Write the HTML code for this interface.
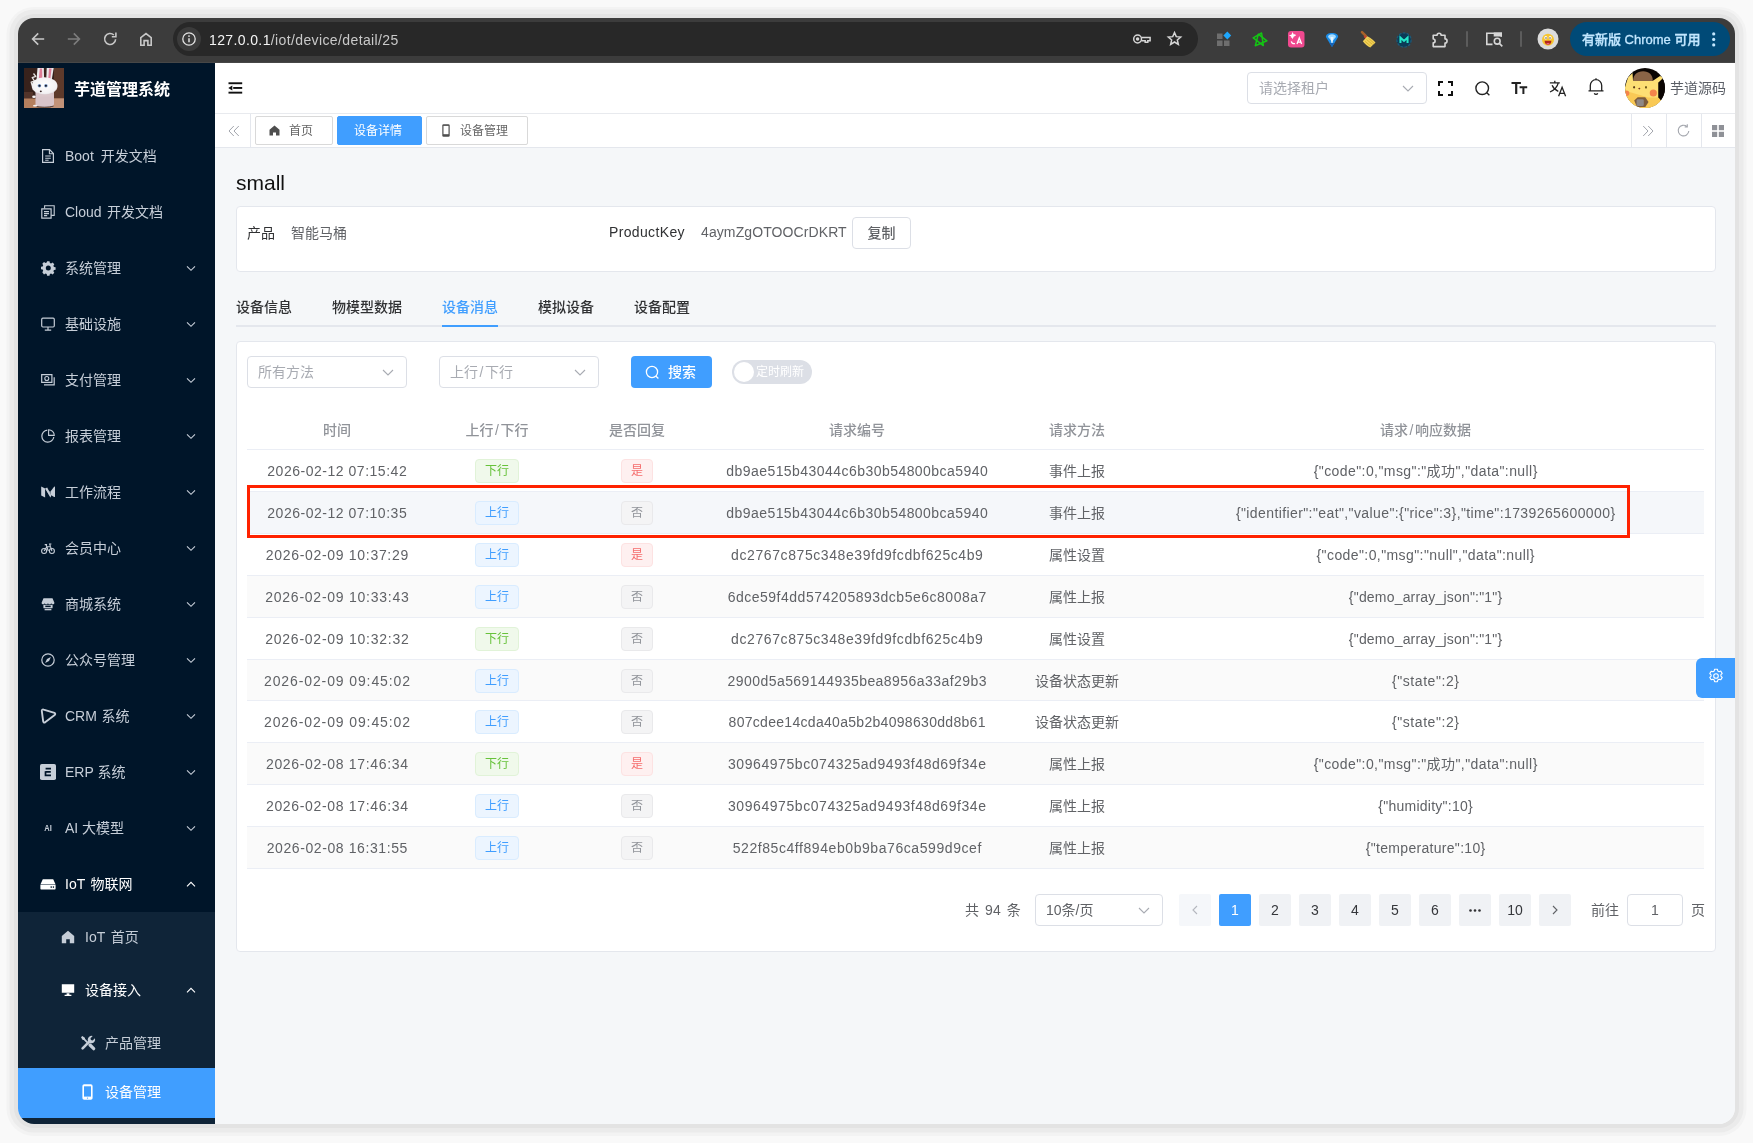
<!DOCTYPE html>
<html lang="zh-CN">
<head>
<meta charset="utf-8">
<title>设备详情</title>
<style>
*{box-sizing:border-box;margin:0;padding:0}
html,body{width:1753px;height:1143px;overflow:hidden}
body{background:#f9f9f9;font-family:"Liberation Sans","Noto Sans CJK SC",sans-serif;font-size:14px;color:#606266;position:relative}
.shadow{position:absolute;left:18px;top:18px;width:1717px;height:1106px;border-radius:16px;box-shadow:0 0 0 4px #e3e3e3,0 0 0 8.500px #ebebeb,0 .5px 0 11.500px #f3f3f3}
.win{position:absolute;left:18px;top:18px;width:1717px;height:1106px;border-radius:16px;overflow:hidden;background:#f5f7f9}
.pg{position:absolute;left:-18px;top:-18px;width:1753px;height:1143px;will-change:transform}
.abs{position:absolute}
svg{display:block;overflow:visible}
/* chrome toolbar */
.chrome{position:absolute;left:18px;top:18px;width:1717px;height:45px;background:#3c3c3c;border-bottom:1px solid #474747}
.omni{position:absolute;left:173px;top:22px;width:1025px;height:34px;border-radius:17px;background:#282828}
.url{position:absolute;left:209px;top:30.500px;font-size:14px;line-height:18px;color:#c9c9c9;letter-spacing:.38px}
.upd{position:absolute;left:1570px;top:22px;width:160px;height:34px;border-radius:17px;background:#004a77}
.upd span{position:absolute;left:12px;top:9px;font-size:13px;line-height:18px;color:#c2e7ff;font-weight:500;white-space:nowrap;-webkit-text-stroke:.3px #c2e7ff}
/* sidebar */
.side{position:absolute;left:18px;top:63px;width:197px;height:1061px;background:#001529}
.sub{position:absolute;left:18px;top:912px;width:197px;height:212px;background:#0f2438}
.act{position:absolute;left:18px;top:1068px;width:197px;height:50px;background:#409eff}
.mi{position:absolute;left:65px;height:20px;line-height:20px;font-size:14px;color:#cfd6de;white-space:nowrap}
.chev{position:absolute;left:185px;width:10px;height:6px}
/* header */
.hdr{position:absolute;left:215px;top:63px;width:1520px;height:51px;background:#fff;border-bottom:1px solid #e8eaee}
.tags{position:absolute;left:215px;top:114px;width:1520px;height:34px;background:#fff;border-bottom:1px solid #e4e7ed}
.tag{position:absolute;top:116px;height:29px;border:1px solid #d9d9d9;border-radius:2px;font-size:12px;line-height:28.5px;color:#666;background:#fff;white-space:nowrap}
.tag.on{background:#409eff;border-color:#409eff;color:#fff}
.card{position:absolute;background:#fff;border:1px solid #e4e7ed;border-radius:4px}
.sel{position:absolute;height:32px;border:1px solid #dcdfe6;border-radius:4px;background:#fff;font-size:14px;line-height:30px;color:#a8abb2;padding-left:10px;white-space:nowrap}

.t14{position:absolute;font-size:14px;line-height:20px;white-space:nowrap}
.tab{position:absolute;top:297px;font-size:14px;line-height:20px;font-weight:500;color:#303133;white-space:nowrap}
.th{position:absolute;top:420px;font-size:14px;line-height:20px;font-weight:500;color:#909399;text-align:center;white-space:nowrap}
.row{position:absolute;left:247px;width:1457px;height:42px;border-bottom:1px solid #ebeef5}
.row.st{background:#fafafa}
.row.hv{background:#f5f7fa}
.c{position:absolute;top:0;height:42px;line-height:42px;font-size:14px;color:#606266;text-align:center;white-space:nowrap}
.c1{left:0;width:180px;letter-spacing:.55px}
.c2{left:180px;width:140px}
.c3{left:320px;width:140px}
.c4{left:460px;width:300px;letter-spacing:.44px}
.c5{left:760px;width:140px}
.c6{left:900px;width:557px;letter-spacing:.36px}
.tg{display:inline-block;vertical-align:middle;height:24px;line-height:22px;padding:0 9px;font-size:12px;border:1px solid;border-radius:4px;letter-spacing:0;position:relative;top:-1px}
.tg.b{color:#409eff;background:#ecf5ff;border-color:#d9ecff}
.tg.g{color:#67c23a;background:#f0f9eb;border-color:#e1f3d8}
.tg.r{color:#f56c6c;background:#fef0f0;border-color:#fde2e2}
.tg.i{color:#909399;background:#f4f4f5;border-color:#e9e9eb}
.pb{position:absolute;top:894px;width:32px;height:32px;border-radius:2px;background:#f0f2f5;color:#35373b;font-size:14px;line-height:32px;text-align:center}
.pb.on{background:#409eff;color:#fff}
</style>
</head>
<body>
<div class="shadow"></div>
<div class="win"><div class="pg">

<!-- CHROME -->
<div class="chrome"></div>
<div class="omni"></div>
<div class="url"><span style="color:#f4f4f4">127.0.0.1</span>/iot/device/detail/25</div>
<div class="upd"><span>有新版 Chrome 可用</span></div>
<!-- nav icons -->
<svg class="abs" style="left:30px;top:31px" width="16" height="16" viewBox="0 0 16 16" fill="none" stroke="#c7c7c7" stroke-width="1.6"><path d="M14.2 8H2.8M8.2 2.4L2.6 8l5.6 5.6"/></svg>
<svg class="abs" style="left:66px;top:31px" width="16" height="16" viewBox="0 0 16 16" fill="none" stroke="#7d7d7d" stroke-width="1.6"><path d="M1.8 8h11.4M7.8 2.4L13.4 8l-5.6 5.6"/></svg>
<svg class="abs" style="left:102px;top:31px" width="16" height="16" viewBox="0 0 16 16" fill="none" stroke="#c7c7c7" stroke-width="1.6"><path d="M13.6 8.2A5.5 5.5 0 1 1 11.9 4"/><path d="M13.9 1.6v4.1H9.8" stroke-linejoin="miter"/></svg>
<svg class="abs" style="left:138px;top:31px" width="16" height="16" viewBox="0 0 16 16" fill="none" stroke="#c7c7c7" stroke-width="1.6"><path d="M2.8 14.2V6.6L8 2.5l5.2 4.1v7.6H9.9V9.6H6.1v4.6z"/></svg>
<div class="abs" style="left:177px;top:27px;width:24px;height:24px;border-radius:12px;background:#3b3b3b"></div>
<svg class="abs" style="left:181px;top:31px" width="16" height="16" viewBox="0 0 16 16" fill="none" stroke="#e3e3e3" stroke-width="1.3"><circle cx="8" cy="8" r="6.2"/><path d="M8 7.3v3.9" stroke-width="1.5"/><circle cx="8" cy="5.1" r=".9" fill="#e3e3e3" stroke="none"/></svg>
<!-- key + star -->
<svg class="abs" style="left:1132px;top:30px" width="20" height="18" viewBox="0 0 20 18" fill="none" stroke="#d6d6d6" stroke-width="1.5"><circle cx="5.6" cy="9" r="3.9"/><circle cx="5.6" cy="9" r="1" fill="#d6d6d6"/><path d="M9.5 7.4h8.6v3.3h-2.3v1.6h-2.6v-1.6H9.5"/></svg>
<svg class="abs" style="left:1166.500px;top:31px" width="15" height="15" viewBox="0 0 18 18" fill="none" stroke="#d6d6d6" stroke-width="1.800" stroke-linejoin="miter"><path d="M9 1.9l2.1 4.9 5.3.5-4 3.5 1.2 5.2L9 13.2 4.4 16l1.2-5.2-4-3.5 5.3-.5z"/></svg>
<!-- extensions -->
<svg class="abs" style="left:1216px;top:31px" width="16" height="16" viewBox="0 0 16 16"><rect x="1" y="2.5" width="5.5" height="5.5" fill="#6e6e6e"/><rect x="1" y="9.5" width="5.5" height="5.5" fill="#6e6e6e"/><rect x="8" y="9.5" width="5.5" height="5.5" fill="#6e6e6e"/><path d="M11.3 0.6l3.9 3.9-3.9 3.9-3.9-3.9z" fill="#1ea7fd"/></svg>
<svg class="abs" style="left:1252px;top:32px" width="16" height="16" viewBox="0 0 16 16" fill="none" stroke="#14c414" stroke-width="1.500" stroke-linejoin="round"><path d="M9.600 1l1.700 12.600L1.200 5.800z"/><path d="M3.300 13.700L6.300 2.200l8.600 6.600z"/></svg>
<svg class="abs" style="left:1288px;top:31px" width="17" height="17" viewBox="0 0 17 17"><rect x="0" y="0" width="16.5" height="16.5" rx="3" fill="#f0498f"/><path d="M9 13l2.3-6.2L13.6 13M9.8 11.2h3M3.4 6.6a3 3 0 0 1 4-2.4M7 12.6a3.2 3.2 0 0 1-3.7-2.3M4.6 2.6l.6 1.4 1.4.6-1.4.6-.6 1.4-.6-1.4-1.4-.6 1.4-.6z" fill="none" stroke="#fff" stroke-width="1.3"/></svg>
<svg class="abs" style="left:1325px;top:31.500px" width="14" height="16" viewBox="0 0 16 18"><path d="M1 5.500C1 2.700 4 1 8 1s7 1.700 7 4.500L8 17z" fill="#1c8de8"/><path d="M3.500 5.500C3.500 3.500 5.500 2.300 8 2.300s4.500 1.200 4.500 3.200L8 11z" fill="#a8ddff"/><path d="M6.300 5.500L8 16l1.700-10.500z" fill="#e8f6ff"/><path d="M5 12.500L8 17l3-4.500z" fill="#1463b8"/></svg>
<svg class="abs" style="left:1358px;top:29px" width="20" height="20" viewBox="0 0 20 20"><path d="M4 3.200l4 4" stroke="#a8622a" stroke-width="2.600" stroke-linecap="round"/><path d="M7.200 6.200l2.600 2.500-1.700 1.700-2.500-2.600z" fill="#c9452f"/><path d="M9.300 7.200c3 1.200 6.200 3.700 8.200 6.400l-5.200 5c-2.700-1.300-5.500-3.400-7.500-6.300z" fill="#efcf57"/><path d="M8.500 10.500l6 5M7 12.300l5.500 4.700M10.500 9.300l5.800 5.200" stroke="#d3a928" stroke-width=".8" fill="none"/></svg>
<svg class="abs" style="left:1396px;top:31.500px" width="16" height="16" viewBox="0 0 18 18"><circle cx="9" cy="9" r="8" fill="#0b3b57" stroke="#1b5a7a" stroke-width="1.400" stroke-dasharray="3 1.500"/><path d="M5 12.300V6.200l4 3.800 4-3.800v6.100" fill="none" stroke="#25e6c8" stroke-width="2.300" stroke-linejoin="miter"/></svg>
<svg class="abs" style="left:1431px;top:29.500px" width="19" height="19" viewBox="0 0 19 19" fill="none" stroke="#d6d6d6" stroke-width="1.600" stroke-linejoin="round"><path d="M2.200 5.200h3.900a2 2 0 0 1 4 0H14v3.700a2.050 2.050 0 0 1 0 4.100v3.600H2.200v-3.800a1.900 1.900 0 0 0 0-3.800z"/></svg>
<div class="abs" style="left:1466px;top:31px;width:2px;height:16px;background:#5c5c5c;border-radius:1px"></div>
<svg class="abs" style="left:1485px;top:30px" width="19" height="18" viewBox="0 0 19 18" fill="none" stroke="#d6d6d6" stroke-width="1.600"><path d="M7.500 14.400H1.800V3.300h14.400v3.500"/><path d="M9.500 3.300h6.700v2.400H9.500z" fill="#d6d6d6"/><circle cx="12.200" cy="11.200" r="2.900"/><path d="M14.300 13.400l3 3"/></svg>
<div class="abs" style="left:1520px;top:31px;width:2px;height:16px;background:#5c5c5c;border-radius:1px"></div>
<!-- profile avatar -->
<svg class="abs" style="left:1537px;top:28px" width="22" height="22" viewBox="0 0 22 22"><circle cx="11" cy="11" r="10.500" fill="#dcdcdc"/><circle cx="11" cy="11.800" r="6" fill="#f7c531"/><ellipse cx="8.800" cy="9.800" rx="1.500" ry="1.800" fill="#fff"/><ellipse cx="13.200" cy="9.800" rx="1.500" ry="1.800" fill="#fff"/><circle cx="9" cy="10" r=".7" fill="#3b2a1a"/><circle cx="13" cy="10" r=".7" fill="#3b2a1a"/><path d="M7.600 12.800h6.800c0 2.600-1.500 3.900-3.400 3.900s-3.400-1.300-3.400-3.900z" fill="#b3261e"/><path d="M9.200 15.600c1-.9 2.600-.9 3.600 0-.9 1.300-2.700 1.300-3.600 0z" fill="#f06a8a"/></svg>
<svg class="abs" style="left:1711px;top:31px" width="5" height="17" viewBox="0 0 5 17" fill="#c2e7ff"><circle cx="2.700" cy="2.900" r="1.600"/><circle cx="2.700" cy="8.400" r="1.600"/><circle cx="2.700" cy="13.900" r="1.600"/></svg>


<!-- SIDEBAR -->
<div class="side"></div>
<div class="sub"></div>
<div class="act"></div>
<!-- logo -->
<svg class="abs" style="left:24px;top:68px" width="40" height="40" viewBox="0 0 40 40"><defs><radialGradient id="lg2" cx=".5" cy=".45" r=".62"><stop offset="0" stop-color="#ffffff"/><stop offset=".75" stop-color="#f3f1f3"/><stop offset="1" stop-color="#cfc7cc"/></radialGradient><clipPath id="lgc"><rect width="40" height="40"/></clipPath></defs><g clip-path="url(#lgc)"><rect width="40" height="40" fill="#38221c"/><path d="M30 0h10v31H30z" fill="#5e3a2b"/><path d="M0 24h9v7H0z" fill="#53342a"/><path d="M0 30.500h40V40H0z" fill="#b47f5e"/><path d="M27 30.500h13V40H27z" fill="#c29278"/><path d="M9.500 5.500l2.300 2.800-3.600 1.300 2.300 3.400-3.300 1.200 1 3.300" stroke="#e8e4e2" stroke-width="1.300" fill="none" stroke-linejoin="round"/><path d="M12.500 12L13.500 0h6.300l.3 11z" fill="#ecebed"/><path d="M14.800 10.500L15.800 .500h2.300l.2 10z" fill="#df7d96"/><path d="M22.300 11L22.700 0h7l-2 12z" fill="#ecebed"/><path d="M24.300 10.500L25 .500h2.600l-1.300 10.500z" fill="#df7d96"/><path d="M11.500 24h18.500v12c0 2-3 3-9.200 3s-9.300-1-9.300-3z" fill="#d8c4c9"/><path d="M12 38.500c4 1 13 1 17.500-.3" stroke="#4a3a38" stroke-width=".9" fill="none"/><ellipse cx="20.600" cy="18" rx="12.900" ry="8.800" fill="url(#lg2)"/><path d="M14 24.500c2 2.500 10.500 2.800 14 .3l1 3.700H13z" fill="#dbc8cc"/><circle cx="15.400" cy="17.700" r="1.800" fill="#7f9fd0"/><circle cx="21.900" cy="17.700" r="1.800" fill="#7f9fd0"/><circle cx="15.500" cy="17.800" r="1.050" fill="#1c1c24"/><circle cx="21.900" cy="17.800" r="1.050" fill="#1c1c24"/><ellipse cx="16.800" cy="23.400" rx="1" ry=".8" fill="#3c2a2a"/><ellipse cx="10" cy="28.700" rx="1.800" ry="1.200" fill="#f6f3f4"/><ellipse cx="11.200" cy="37.700" rx="2.200" ry=".9" fill="#f3f0f1"/></g></svg>
<div class="abs" style="left:74px;top:79px;font-size:16px;line-height:22px;font-weight:700;color:#fff;white-space:nowrap">芋道管理系统</div>
<!-- menu -->
<svg class="abs" style="left:41px;top:149px" width="14" height="14" viewBox="0 0 14 14" fill="none" stroke="#c6ced8"><path d="M1.600 .700h7l3.800 3.800v8.800H1.600z" stroke-width="1.200"/><path d="M8.400 .900v3.800h3.800M4.200 7h5.600M4.200 9.200h5.600M4.200 11.300h3.400" stroke-width="1.100"/></svg>
<div class="mi" style="word-spacing:3px;top:146px;color:#c6ced8">Boot 开发文档</div>
<svg class="abs" style="left:41px;top:205.0px" width="14" height="14" viewBox="0 0 14 14" ><path d="M.800 3.800h9.300v9.400H.800z" fill="none" stroke="#c6ced8" stroke-width="1.200"/><path d="M3.600 3.600V.800h9.600v9.600h-3M3 6.600h5M3 8.600h5M3 10.600h3.200" fill="none" stroke="#c6ced8" stroke-width="1.100"/></svg>
<div class="mi" style="word-spacing:1.5px;top:202px;color:#c6ced8">Cloud 开发文档</div>
<svg class="abs" style="left:41px;top:261.0px" width="14" height="14" viewBox="0 0 14 14" ><path d="M5.800 .500h2.400l.4 1.700 1.200.5 1.500-.9 1.700 1.700-.9 1.500.5 1.200 1.700.4v2.400l-1.700.4-.5 1.200.9 1.500-1.700 1.700-1.500-.9-1.200.5-.4 1.700H5.800l-.4-1.700-1.200-.5-1.500.9L1 11.600l.9-1.500-.5-1.200L-.300 8.500V6.100l1.700-.4.5-1.200L1 3 2.700 1.300l1.500.9 1.200-.5z" transform="translate(.3 -.3)" fill="#c6ced8"/><circle cx="7.300" cy="7" r="2.500" fill="#001529"/></svg>
<div class="mi" style="top:258px;color:#c6ced8">系统管理</div>
<svg class="abs" style="left:185.5px;top:264.5px" width="10" height="7" viewBox="0 0 10 7" fill="none" stroke="#c6ced8" stroke-width="1.100"><path d="M1 1.300l4 4 4-4"/></svg>
<svg class="abs" style="left:41px;top:317.0px" width="14" height="14" viewBox="0 0 14 14" ><rect x=".700" y="1.200" width="12.600" height="8.800" rx="1.200" fill="none" stroke="#c6ced8" stroke-width="1.200"/><path d="M7 10v3M3.800 13.100h6.400" stroke="#c6ced8" stroke-width="1.200" fill="none"/></svg>
<div class="mi" style="top:314px;color:#c6ced8">基础设施</div>
<svg class="abs" style="left:185.5px;top:320.5px" width="10" height="7" viewBox="0 0 10 7" fill="none" stroke="#c6ced8" stroke-width="1.100"><path d="M1 1.300l4 4 4-4"/></svg>
<svg class="abs" style="left:41px;top:373.0px" width="14" height="14" viewBox="0 0 14 14" ><path d="M.700 1.700h10.200v7.600H.700z" fill="none" stroke="#c6ced8" stroke-width="1.200"/><circle cx="5.800" cy="5.500" r="2" fill="none" stroke="#c6ced8" stroke-width="1.100"/><path d="M13.200 4.300v7.600H3" fill="none" stroke="#c6ced8" stroke-width="1.200"/></svg>
<div class="mi" style="top:370px;color:#c6ced8">支付管理</div>
<svg class="abs" style="left:185.5px;top:376.5px" width="10" height="7" viewBox="0 0 10 7" fill="none" stroke="#c6ced8" stroke-width="1.100"><path d="M1 1.300l4 4 4-4"/></svg>
<svg class="abs" style="left:41px;top:429.0px" width="14" height="14" viewBox="0 0 14 14" ><path d="M6.300 1.200A6 6 0 1 0 12.800 8" fill="none" stroke="#c6ced8" stroke-width="1.200"/><path d="M7.600 .700a5.700 5.700 0 0 1 5.700 5.700H7.600z" fill="none" stroke="#c6ced8" stroke-width="1.100"/></svg>
<div class="mi" style="top:426px;color:#c6ced8">报表管理</div>
<svg class="abs" style="left:185.5px;top:432.5px" width="10" height="7" viewBox="0 0 10 7" fill="none" stroke="#c6ced8" stroke-width="1.100"><path d="M1 1.300l4 4 4-4"/></svg>
<svg class="abs" style="left:41px;top:485px" width="14" height="14" viewBox="0 0 14 14"><path d="M.200 1.600l3.900 2v9l-3.900-2z" fill="#c6ced8"/><path d="M4.100 3.600L6.200 2.400l4 8.200-.7 2z" fill="#c6ced8"/><path d="M4.100 3.600l5.400 9V6.700z" fill="#c6ced8" opacity=".6"/><path d="M9.500 6.400l3.600-4.600c.3-.4.900-.2.900.3v9.400c0 .5-.5.800-.9.500l-3.600-2.200z" fill="#c6ced8"/></svg>
<div class="mi" style="top:482px;color:#c6ced8">工作流程</div>
<svg class="abs" style="left:185.5px;top:488.5px" width="10" height="7" viewBox="0 0 10 7" fill="none" stroke="#c6ced8" stroke-width="1.100"><path d="M1 1.300l4 4 4-4"/></svg>
<svg class="abs" style="left:41px;top:541px" width="14" height="14" viewBox="0 0 14 14" fill="none" stroke="#c6ced8" stroke-width="1.100"><circle cx="3.100" cy="10" r="2.500"/><circle cx="10.900" cy="10" r="2.500"/><path d="M3.100 10l2.700-4.300h3.700l1.400 4.300M5.800 5.700L5 3.600M3.700 3.600h2.400M9.500 5.700L8.600 3h1.800M5.800 5.700L7.300 10"/></svg>
<div class="mi" style="top:538px;color:#c6ced8">会员中心</div>
<svg class="abs" style="left:185.5px;top:544.5px" width="10" height="7" viewBox="0 0 10 7" fill="none" stroke="#c6ced8" stroke-width="1.100"><path d="M1 1.300l4 4 4-4"/></svg>
<svg class="abs" style="left:41px;top:597px" width="14" height="14" viewBox="0 0 14 14"><path d="M2.500 1.200h9l1.900 4.500c0 1-.7 1.600-1.600 1.600-.7 0-1.300-.4-1.500-1-.3.600-.9 1-1.600 1S7.300 6.900 7 6.300c-.3.600-.9 1-1.700 1s-1.300-.4-1.600-1c-.2.600-.8 1-1.500 1C1.300 7.300.600 6.700.600 5.700z" fill="#c6ced8"/><path d="M2.400 7.800h9.200v3.400H2.400z" fill="#c6ced8"/><path d="M4.300 8.600h5.400v1.500H4.300z" fill="#001529"/><path d="M3.600 11.800h6.800v1.500H3.600z" fill="#c6ced8"/></svg>
<div class="mi" style="top:594px;color:#c6ced8">商城系统</div>
<svg class="abs" style="left:185.5px;top:600.5px" width="10" height="7" viewBox="0 0 10 7" fill="none" stroke="#c6ced8" stroke-width="1.100"><path d="M1 1.300l4 4 4-4"/></svg>
<svg class="abs" style="left:41px;top:653.0px" width="14" height="14" viewBox="0 0 14 14" ><circle cx="7" cy="7" r="6.200" fill="none" stroke="#c6ced8" stroke-width="1.200"/><path d="M9.900 4.100L8 8 4.100 9.900 6 6z" fill="#c6ced8"/></svg>
<div class="mi" style="top:650px;color:#c6ced8">公众号管理</div>
<svg class="abs" style="left:185.5px;top:656.5px" width="10" height="7" viewBox="0 0 10 7" fill="none" stroke="#c6ced8" stroke-width="1.100"><path d="M1 1.300l4 4 4-4"/></svg>
<svg class="abs" style="left:40px;top:708px" width="17" height="16" viewBox="0 0 17 16" fill="none" stroke="#c6ced8" stroke-linejoin="round"><path d="M3.600 1.600c-1-.4-1.900.3-1.800 1.300l1.400 10.600c.1 1 1.200 1.400 1.900.8l9.600-7.300c.8-.6.700-1.700-.2-2.100z" stroke-width="1.900"/></svg>
<div class="mi" style="word-spacing:0.7px;top:706px;color:#c6ced8">CRM 系统</div>
<svg class="abs" style="left:185.5px;top:712.5px" width="10" height="7" viewBox="0 0 10 7" fill="none" stroke="#c6ced8" stroke-width="1.100"><path d="M1 1.300l4 4 4-4"/></svg>
<svg class="abs" style="left:40px;top:764px" width="16" height="16" viewBox="0 0 16 16"><rect x="0" y="0" width="16" height="16" rx="1.800" fill="#c6ced8"/><path d="M11 4.700H5.600M5.500 7.900h5.300M5.500 7.200v4.200H11" fill="none" stroke="#001529" stroke-width="1.700"/></svg>
<div class="mi" style="top:762px;color:#c6ced8">ERP 系统</div>
<svg class="abs" style="left:185.5px;top:768.5px" width="10" height="7" viewBox="0 0 10 7" fill="none" stroke="#c6ced8" stroke-width="1.100"><path d="M1 1.300l4 4 4-4"/></svg>
<svg class="abs" style="left:41px;top:821px" width="14" height="14" viewBox="0 0 14 14"><text x="7" y="10.200" font-size="8.500" font-weight="700" text-anchor="middle" fill="#c6ced8" font-family="Liberation Sans,sans-serif" textLength="7.500" lengthAdjust="spacingAndGlyphs">AI</text></svg>
<div class="mi" style="top:818px;color:#c6ced8">AI 大模型</div>
<svg class="abs" style="left:185.5px;top:824.5px" width="10" height="7" viewBox="0 0 10 7" fill="none" stroke="#c6ced8" stroke-width="1.100"><path d="M1 1.300l4 4 4-4"/></svg>
<svg class="abs" style="left:40px;top:877.0px" width="16" height="14" viewBox="0 0 16 14" ><path d="M2.800 2.200h10.400l2.300 5H.500zM.400 7.800h15.200v3.600c0 .6-.4 1-1 1H1.400c-.6 0-1-.4-1-1z" fill="#fff"/><circle cx="11.200" cy="10.100" r=".8" fill="#001529"/><circle cx="13.400" cy="10.100" r=".8" fill="#001529"/></svg>
<div class="mi" style="word-spacing:1.7px;top:874px;color:#fff">IoT 物联网</div>
<svg class="abs" style="left:185.5px;top:880.5px" width="10" height="7" viewBox="0 0 10 7" fill="none" stroke="#fff" stroke-width="1.100"><path d="M1 5.300L5 1.300l4 4"/></svg>
<svg class="abs" style="left:61px;top:930px" width="14" height="14" viewBox="0 0 14 14"><path d="M7 .800l6.200 5.300v7.100H8.800V9.300H5.200v3.900H.800V6.100z" fill="#c6ced8"/></svg>
<div class="mi" style="word-spacing:1.8px;left:85px;top:927px;color:#c6ced8">IoT 首页</div>
<svg class="abs" style="left:61px;top:983px" width="14" height="14" viewBox="0 0 14 14"><path d="M.800 1.300h12.400v8.400H.800zM5.600 10.300h2.800v1.500h2v1.100H3.600v-1.100h2z" fill="#fff"/></svg>
<div class="mi" style="left:85px;top:980px;color:#fff">设备接入</div>
<svg class="abs" style="left:185.5px;top:986.5px" width="10" height="7" viewBox="0 0 10 7" fill="none" stroke="#fff" stroke-width="1.100"><path d="M1 5.300L5 1.300l4 4"/></svg>
<svg class="abs" style="left:80px;top:1035px" width="16" height="16" viewBox="0 0 16 16"><g fill="none" stroke="#c6ced8" stroke-linecap="round"><path d="M3.600 3.600l4.200 4.200" stroke-width="1.700"/><path d="M10 10l3.700 3.700" stroke-width="3.200"/><path d="M2.600 13.400l7.200-7.200" stroke-width="2.600"/></g><path d="M1 2.300L2.300 1l2.600 1.700.2 1.500-.9.900-1.500-.2z" fill="#c6ced8"/><path d="M14.900 3.300a3.700 3.700 0 1 1-2.200-2.200L10.500 3.300l.4 1.800 1.800.4z" fill="#c6ced8"/></svg>
<div class="mi" style="left:105px;top:1033px;color:#c6ced8">产品管理</div>
<svg class="abs" style="left:82px;top:1084px" width="11" height="16" viewBox="0 0 11 16"><rect x=".400" y=".300" width="10.200" height="15.400" rx="1.800" fill="#fff"/><rect x="2" y="2.300" width="7" height="10.300" fill="#409eff"/><circle cx="5.500" cy="14.100" r=".700" fill="#409eff"/></svg>
<div class="mi" style="left:105px;top:1082px;color:#fff">设备管理</div>


<!-- HEADER -->
<div class="hdr"></div>
<div class="tags"></div>


<!-- header icons -->
<svg class="abs" style="left:228px;top:82px" width="15" height="12" viewBox="0 0 15 12" fill="#111"><rect x=".500" y=".300" width="13.700" height="1.900"/><rect x="5.200" y="5" width="9" height="1.900"/><rect x=".500" y="9.700" width="13.700" height="1.900"/><path d="M.300 5.950L4.300 3.400v5.100z"/></svg>
<div class="sel" style="left:1247px;top:72px;width:180px;padding-left:11px">请选择租户</div>
<svg class="abs" style="left:1402px;top:85px" width="12" height="7" viewBox="0 0 12 7" fill="none" stroke="#a8abb2" stroke-width="1.100"><path d="M1 1l5 5 5-5"/></svg>
<svg class="abs" style="left:1438px;top:81px" width="15" height="15" viewBox="0 0 15 15" fill="none" stroke="#111" stroke-width="2"><path d="M1 5V1h4M10 1h4v4M14 10v4h-4M5 14H1v-4"/></svg>
<svg class="abs" style="left:1474px;top:80px" width="17" height="17" viewBox="0 0 17 17" fill="none" stroke="#222" stroke-width="1.400"><circle cx="8.200" cy="8.200" r="6.300"/><path d="M12.800 12.800l2.600 2.400"/></svg>
<svg class="abs" style="left:1511px;top:81px" width="17" height="14" viewBox="0 0 17 14" fill="#222"><path d="M.500 1h9.400v2.100H6.300V13H4.100V3.100H.500zM8.600 5.300h7.600v1.900h-2.800V13h-2V7.200H8.600z"/></svg>
<svg class="abs" style="left:1549px;top:80px" width="18" height="17" viewBox="0 0 18 17" fill="none" stroke="#222" stroke-width="1.300"><path d="M.800 2.900h10M5.800 .800v2.100M9.300 2.900C8.400 6.700 5.400 10 1 12M3.100 5.200c1.100 2.600 3.500 5 6.200 6.200M9.600 16.200l3.500-9 3.500 9M10.800 13.400h4.600"/></svg>
<svg class="abs" style="left:1587px;top:77px" width="18" height="19" viewBox="0 0 18 19" fill="none" stroke="#222" stroke-width="1.300"><path d="M9 1.200v1.500M3.300 13.600V8.400a5.700 5.700 0 0 1 11.400 0v5.200M1.500 13.800h15M7.300 16.200a1.800 1.800 0 0 0 3.400 0" /></svg>
<!-- user avatar -->
<svg class="abs" style="left:1625px;top:68px" width="40" height="40" viewBox="0 0 40 40"><defs><clipPath id="av"><circle cx="20" cy="20" r="20"/></clipPath></defs><g clip-path="url(#av)"><rect width="40" height="40" fill="#0a0503"/><path d="M7.500 5L3 9.500-1 22v20h36l2-8-3.500-4V14.500L38.500 9.500 35 8l-7.500 5-19.500-.5z" fill="#fddf74"/><path d="M-1 26l5.500-2 12.800 3.800 5.700 1.700h11l2.500 3v9.500H-1z" fill="#f9c955"/><path d="M8.100 12.900c0-6 4-9.600 10-9.600s9.700 3.600 9.700 9.600z" fill="#8a6446"/><path d="M33.500 14.500l6.500-4v24l-3-1-3.500-4z" fill="#0a0503"/><circle cx="28.300" cy="25" r="3.600" fill="#f5844b"/><circle cx="1.600" cy="25.300" r="2.700" fill="#f5844b"/><ellipse cx="9.100" cy="19.300" rx=".9" ry="1.300" fill="#5a3a16"/><ellipse cx="21" cy="19.300" rx=".9" ry="1.400" fill="#6b5418"/><ellipse cx="14.300" cy="20.600" rx="1" ry=".8" fill="#7a3a20"/><path d="M9.200 32.500l3.500-3.200h7.500l3.300 4.700-3.200 5H12z" fill="#7d5c3c"/><rect x="11.600" y="31.300" width="7.200" height="6.700" rx="1.300" fill="#8f8886"/></g></svg>
<div class="abs" style="left:1670px;top:78px;font-size:14px;line-height:20px;color:#5a5e66;white-space:nowrap">芋道源码</div>

<!-- tags bar -->
<svg class="abs" style="left:228px;top:125px" width="12" height="12" viewBox="0 0 12 12" fill="none" stroke="#a3a6ad" stroke-width="1"><path d="M5.800 1L1 6l4.800 5M10.800 1L6 6l4.800 5"/></svg>
<div class="abs" style="left:250px;top:114px;width:1px;height:33px;background:#e4e7ed"></div>
<div class="tag" style="left:255px;width:78px;padding-left:33px">首页</div>
<svg class="abs" style="left:269px;top:125px" width="11" height="11" viewBox="0 0 11 11"><path d="M5.500 .400l5 4.300v5.900H7V7.400H4v3.200H.500V4.700z" fill="#4e4e4e"/></svg>
<div class="tag on" style="left:337px;width:85px;padding-left:16px">设备详情</div>
<div class="tag" style="left:426px;width:102px;padding-left:33px">设备管理</div>
<svg class="abs" style="left:442px;top:124px" width="8" height="13" viewBox="0 0 8 13"><rect x=".300" y=".300" width="7.400" height="12.400" rx="1.300" fill="#4e4e4e"/><rect x="1.500" y="1.900" width="5" height="8.300" fill="#fff"/></svg>
<div class="abs" style="left:1631px;top:114px;width:1px;height:33px;background:#e4e7ed"></div>
<div class="abs" style="left:1666px;top:114px;width:1px;height:33px;background:#e4e7ed"></div>
<div class="abs" style="left:1701px;top:114px;width:1px;height:33px;background:#e4e7ed"></div>
<svg class="abs" style="left:1642px;top:125px" width="12" height="12" viewBox="0 0 12 12" fill="none" stroke="#a3a6ad" stroke-width="1"><path d="M1.200 1L6 6l-4.800 5M6.200 1L11 6l-4.800 5"/></svg>
<svg class="abs" style="left:1677px;top:124px" width="13" height="13" viewBox="0 0 13 13" fill="none" stroke="#a3a6ad" stroke-width="1.100"><path d="M11.800 7A5.300 5.300 0 1 1 9.900 2.500"/><path d="M10.300 .300v2.600H7.700"/></svg>
<svg class="abs" style="left:1712px;top:125px" width="12" height="12" viewBox="0 0 12 12" fill="#8f9197"><rect x="0" y="0" width="5.200" height="5.200"/><rect x="6.800" y="0" width="5.200" height="5.200"/><rect x="0" y="6.800" width="5.200" height="5.200"/><rect x="6.800" y="6.800" width="5.200" height="5.200"/></svg>

<!-- CONTENT -->
<div class="abs" style="left:236px;top:170px;font-size:21px;line-height:26px;color:#111">small</div>
<div class="card" style="left:236px;top:206px;width:1480px;height:66px"></div>
<div class="t14" style="left:247px;top:223px;color:#303133">产品</div>
<div class="t14" style="left:291px;top:223px;color:#606266">智能马桶</div>
<div class="t14" style="left:609px;top:222px;color:#303133;letter-spacing:.35px">ProductKey</div>
<div class="t14" style="left:701px;top:222px;color:#606266;letter-spacing:.1px">4aymZgOTOOCrDKRT</div>
<div class="abs" style="left:852px;top:217px;width:59px;height:32px;border:1px solid #dcdfe6;border-radius:4px;background:#fff;font-size:14px;line-height:30px;text-align:center;color:#606266;font-weight:500">复制</div>

<!-- tabs -->
<div class="abs" style="left:236px;top:325px;width:1480px;height:2px;background:#e4e7ed"></div>
<div class="abs" style="left:442px;top:325px;width:56px;height:2px;background:#409eff"></div>
<div class="tab" style="left:236px">设备信息</div>
<div class="tab" style="left:332px">物模型数据</div>
<div class="tab" style="left:442px;color:#409eff">设备消息</div>
<div class="tab" style="left:538px">模拟设备</div>
<div class="tab" style="left:634px">设备配置</div>

<!-- message card -->
<div class="card" style="left:236px;top:341px;width:1480px;height:611px"></div>
<div class="sel" style="left:247px;top:356px;width:160px">所有方法</div>
<svg class="abs" style="left:382px;top:369px" width="12" height="7" viewBox="0 0 12 7" fill="none" stroke="#a8abb2" stroke-width="1.100"><path d="M1 1l5 5 5-5"/></svg>
<div class="sel" style="left:439px;top:356px;width:160px">上行<span style="margin:0 1.5px">/</span>下行</div>
<svg class="abs" style="left:574px;top:369px" width="12" height="7" viewBox="0 0 12 7" fill="none" stroke="#a8abb2" stroke-width="1.100"><path d="M1 1l5 5 5-5"/></svg>
<div class="abs" style="left:631px;top:356px;width:81px;height:32px;border-radius:4px;background:#409eff;color:#fff;font-size:14px;line-height:32px;font-weight:500;padding-left:37px">搜索</div>
<svg class="abs" style="left:645px;top:365px" width="15" height="15" viewBox="0 0 15 15" fill="none" stroke="#fff" stroke-width="1.300"><circle cx="7" cy="7" r="5.600"/><path d="M11 11.200l2.400 2.200"/></svg>
<div class="abs" style="left:732px;top:360px;width:80px;height:24px;border-radius:12px;background:#dcdfe6;color:#fff;font-size:12px;line-height:25.500px;padding-left:24px;white-space:nowrap">定时刷新</div>
<div class="abs" style="left:734px;top:362px;width:20px;height:20px;border-radius:10px;background:#fff"></div>

<!-- table -->
<div class="abs" style="left:247px;top:449px;width:1457px;height:1px;background:#ebeef5"></div>
<div class="th" style="left:247px;width:180px">时间</div>
<div class="th" style="left:427px;width:140px">上行<span style="margin:0 1.5px">/</span>下行</div>
<div class="th" style="left:567px;width:140px">是否回复</div>
<div class="th" style="left:707px;width:300px">请求编号</div>
<div class="th" style="left:1007px;width:140px">请求方法</div>
<div class="th" style="left:1147px;width:557px">请求<span style="margin:0 1.5px">/</span>响应数据</div>
<div class="row " style="top:450px;height:42px"><div class="c c1" style="letter-spacing:0.52px;padding-left:0.52px">2026-02-12 07:15:42</div><div class="c c2"><span class="tg g">下行</span></div><div class="c c3"><span class="tg r">是</span></div><div class="c c4" style="letter-spacing:0.45px;padding-left:0.45px">db9ae515b43044c6b30b54800bca5940</div><div class="c c5">事件上报</div><div class="c c6" style="letter-spacing:0.42px;padding-left:0.42px">{"code":0,"msg":"成功","data":null}</div></div>
<div class="row hv" style="top:492px;height:42px"><div class="c c1" style="letter-spacing:0.52px;padding-left:0.52px">2026-02-12 07:10:35</div><div class="c c2"><span class="tg b">上行</span></div><div class="c c3"><span class="tg i">否</span></div><div class="c c4" style="letter-spacing:0.45px;padding-left:0.45px">db9ae515b43044c6b30b54800bca5940</div><div class="c c5">事件上报</div><div class="c c6" style="letter-spacing:0.4px;padding-left:0.4px">{"identifier":"eat","value":{"rice":3},"time":1739265600000}</div></div>
<div class="row " style="top:534px;height:42px"><div class="c c1" style="letter-spacing:0.69px;padding-left:0.69px">2026-02-09 10:37:29</div><div class="c c2"><span class="tg b">上行</span></div><div class="c c3"><span class="tg r">是</span></div><div class="c c4" style="letter-spacing:0.59px;padding-left:0.59px">dc2767c875c348e39fd9fcdbf625c4b9</div><div class="c c5">属性设置</div><div class="c c6" style="letter-spacing:0.41px;padding-left:0.41px">{"code":0,"msg":"null","data":null}</div></div>
<div class="row st" style="top:576px;height:42px"><div class="c c1" style="letter-spacing:0.75px;padding-left:0.75px">2026-02-09 10:33:43</div><div class="c c2"><span class="tg b">上行</span></div><div class="c c3"><span class="tg i">否</span></div><div class="c c4" style="letter-spacing:0.51px;padding-left:0.51px">6dce59f4dd574205893dcb5e6c8008a7</div><div class="c c5">属性上报</div><div class="c c6" style="letter-spacing:0.19px;padding-left:0.19px">{"demo_array_json":"1"}</div></div>
<div class="row " style="top:618px;height:42px"><div class="c c1" style="letter-spacing:0.75px;padding-left:0.75px">2026-02-09 10:32:32</div><div class="c c2"><span class="tg g">下行</span></div><div class="c c3"><span class="tg i">否</span></div><div class="c c4" style="letter-spacing:0.59px;padding-left:0.59px">dc2767c875c348e39fd9fcdbf625c4b9</div><div class="c c5">属性设置</div><div class="c c6" style="letter-spacing:0.19px;padding-left:0.19px">{"demo_array_json":"1"}</div></div>
<div class="row st" style="top:660px;height:41px"><div class="c c1" style="letter-spacing:0.89px;padding-left:0.89px">2026-02-09 09:45:02</div><div class="c c2"><span class="tg b">上行</span></div><div class="c c3"><span class="tg i">否</span></div><div class="c c4" style="letter-spacing:0.44px;padding-left:0.44px">2900d5a569144935bea8956a33af29b3</div><div class="c c5">设备状态更新</div><div class="c c6" style="letter-spacing:0.56px;padding-left:0.56px">{"state":2}</div></div>
<div class="row " style="top:701px;height:42px"><div class="c c1" style="letter-spacing:0.89px;padding-left:0.89px">2026-02-09 09:45:02</div><div class="c c2"><span class="tg b">上行</span></div><div class="c c3"><span class="tg i">否</span></div><div class="c c4" style="letter-spacing:0.3px;padding-left:0.3px">807cdee14cda40a5b2b4098630dd8b61</div><div class="c c5">设备状态更新</div><div class="c c6" style="letter-spacing:0.56px;padding-left:0.56px">{"state":2}</div></div>
<div class="row st" style="top:743px;height:42px"><div class="c c1" style="letter-spacing:0.67px;padding-left:0.67px">2026-02-08 17:46:34</div><div class="c c2"><span class="tg g">下行</span></div><div class="c c3"><span class="tg r">是</span></div><div class="c c4" style="letter-spacing:0.56px;padding-left:0.56px">30964975bc074325ad9493f48d69f34e</div><div class="c c5">属性上报</div><div class="c c6" style="letter-spacing:0.42px;padding-left:0.42px">{"code":0,"msg":"成功","data":null}</div></div>
<div class="row " style="top:785px;height:42px"><div class="c c1" style="letter-spacing:0.67px;padding-left:0.67px">2026-02-08 17:46:34</div><div class="c c2"><span class="tg b">上行</span></div><div class="c c3"><span class="tg i">否</span></div><div class="c c4" style="letter-spacing:0.56px;padding-left:0.56px">30964975bc074325ad9493f48d69f34e</div><div class="c c5">属性上报</div><div class="c c6" style="letter-spacing:0.25px;padding-left:0.25px">{"humidity":10}</div></div>
<div class="row st" style="top:827px;height:42px"><div class="c c1" style="letter-spacing:0.59px;padding-left:0.59px">2026-02-08 16:31:55</div><div class="c c2"><span class="tg b">上行</span></div><div class="c c3"><span class="tg i">否</span></div><div class="c c4" style="letter-spacing:0.57px;padding-left:0.57px">522f85c4ff894eb0b9ba76ca599d9cef</div><div class="c c5">属性上报</div><div class="c c6" style="letter-spacing:0.3px;padding-left:0.3px">{"temperature":10}</div></div>

<!-- red annotation -->
<div class="abs" style="left:246.700px;top:485.200px;width:1383.100px;height:52.800px;border:3.250px solid #ff2200"></div>

<!-- pagination -->
<div class="t14" style="left:965px;top:900px;color:#606266;word-spacing:1.5px;letter-spacing:.3px">共 94 条</div>
<div class="sel" style="left:1035px;top:894px;width:128px;color:#606266">10条/页</div>
<svg class="abs" style="left:1138px;top:907px" width="12" height="7" viewBox="0 0 12 7" fill="none" stroke="#a8abb2" stroke-width="1.100"><path d="M1 1l5 5 5-5"/></svg>
<div class="pb" style="left:1179px;background:#f5f7fa"><svg style="margin:11px auto 0" width="6" height="10" viewBox="0 0 6 10" fill="none" stroke="#b4b7be" stroke-width="1.100"><path d="M5 1L1 5l4 4"/></svg></div>
<div class="pb on" style="left:1219px">1</div>
<div class="pb" style="left:1259px">2</div>
<div class="pb" style="left:1299px">3</div>
<div class="pb" style="left:1339px">4</div>
<div class="pb" style="left:1379px">5</div>
<div class="pb" style="left:1419px">6</div>
<div class="pb" style="left:1459px"><svg style="margin:14.500px auto 0" width="12" height="3" viewBox="0 0 12 3" fill="#303133"><circle cx="1.500" cy="1.500" r="1.300"/><circle cx="6" cy="1.500" r="1.300"/><circle cx="10.500" cy="1.500" r="1.300"/></svg></div>
<div class="pb" style="left:1499px">10</div>
<div class="pb" style="left:1539px"><svg style="margin:11px auto 0" width="6" height="10" viewBox="0 0 6 10" fill="none" stroke="#606266" stroke-width="1.100"><path d="M1 1l4 4-4 4"/></svg></div>
<div class="t14" style="left:1591px;top:900px;color:#606266">前往</div>
<div class="sel" style="left:1627px;top:894px;width:56px;color:#606266;text-align:center;padding:0">1</div>
<div class="t14" style="left:1691px;top:900px;color:#606266">页</div>

<!-- floating setting -->
<div class="abs" style="left:1696px;top:658px;width:40px;height:40px;background:#409eff;border-radius:6px 0 0 6px"></div>
<svg class="abs" style="left:1708px;top:668px" width="16" height="16" viewBox="0 0 16 16" fill="none" stroke="#fff" stroke-width="1.100"><circle cx="8" cy="8" r="2.300"/><path d="M6.600 1.200h2.800l.4 1.800 1.300.7 1.700-.6 1.400 2.400-1.300 1.200v1.500l1.300 1.200-1.400 2.400-1.700-.6-1.300.7-.4 1.800H6.600l-.4-1.800-1.300-.7-1.700.6-1.400-2.400 1.300-1.200V6.800L1.800 5.600l1.400-2.400 1.700.6 1.300-.7z" stroke-linejoin="round"/></svg>


</div></div>
</body>
</html>
